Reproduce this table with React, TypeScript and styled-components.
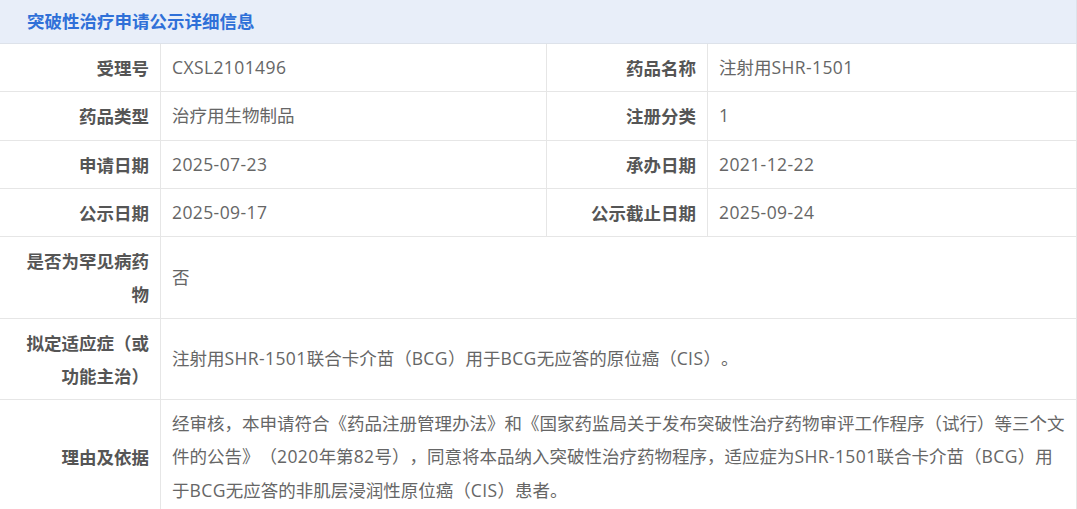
import React from "react";
import styled, { createGlobalStyle } from "styled-components";

const GlobalStyle = createGlobalStyle`
  html, body {
    margin: 0;
    padding: 0;
    background: #fff;
  }
  body {
    font-family: "Open Sans", "Noto Sans CJK SC", sans-serif;
    text-spacing-trim: space-all;
  }
`;

// STYLED COMPONENTS
const Panel = styled.section`
  width: 1077px;
  box-sizing: border-box;
`;

const Header = styled.div`
  height: 44px;
  box-sizing: border-box;
  display: flex;
  align-items: center;
  padding-left: 27px;
  background: #e8eef9;
  border-bottom: 1px solid #dde2ea;
  border-right: 1px solid #dde2ea;
`;

const Title = styled.h2`
  margin: 0 0 2px;
  font-size: 17.5px;
  font-weight: 700;
  color: #2f70d8;
  font-family: "Noto Sans CJK SC", sans-serif;
`;

const Grid = styled.div`
  display: grid;
  grid-template-columns: 161px 386px 161px 369px;
`;

const Cell = styled.div<{ $span?: number }>`
  box-sizing: border-box;
  display: flex;
  align-items: center;
  padding: 7px 11px;
  min-height: 48px;
  border-right: 1px solid #e6e6e6;
  border-bottom: 1px solid #e6e6e6;
  font-size: 17.5px;
  line-height: 33.25px;
  grid-column: ${(p) => (p.$span ? `span ${p.$span}` : "auto")};
`;

const Label = styled(Cell)`
  justify-content: flex-end;
  text-align: right;
  font-weight: 700;
  color: #555;
  font-family: "Noto Sans CJK SC", sans-serif;
`;

const Value = styled(Cell)`
  color: #666;
  font-weight: 400;
  padding-right: 8px;
`;

const Text = styled.span``;

// latin runs are set a touch wider, like the YaHei latin of the original
const Latin = styled.span`
  letter-spacing: 0.4px;
`;

function Mixed({ children }: { children: string }) {
  const parts = children.split(/([A-Za-z0-9.\-]+)/);
  return (
    <Text>
      {parts.map((p, i) =>
        i % 2 === 1 ? <Latin key={i}>{p}</Latin> : <React.Fragment key={i}>{p}</React.Fragment>
      )}
    </Text>
  );
}

type Pair = [string, string];

const pairs: [Pair, Pair][] = [
  [["受理号", "CXSL2101496"], ["药品名称", "注射用SHR-1501"]],
  [["药品类型", "治疗用生物制品"], ["注册分类", "1"]],
  [["申请日期", "2025-07-23"], ["承办日期", "2021-12-22"]],
  [["公示日期", "2025-09-17"], ["公示截止日期", "2025-09-24"]],
];

const wide: Pair[] = [
  ["是否为罕见病药物", "否"],
  ["拟定适应症（或功能主治）", "注射用SHR-1501联合卡介苗（BCG）用于BCG无应答的原位癌（CIS）。"],
  [
    "理由及依据",
    "经审核，本申请符合《药品注册管理办法》和《国家药监局关于发布突破性治疗药物审评工作程序（试行）等三个文件的公告》（2020年第82号），同意将本品纳入突破性治疗药物程序，适应症为SHR-1501联合卡介苗（BCG）用于BCG无应答的非肌层浸润性原位癌（CIS）患者。",
  ],
];

export default function App() {
  return (
    <>
      <GlobalStyle />
      <Panel>
        <Header>
          <Title>突破性治疗申请公示详细信息</Title>
        </Header>
        <Grid>
          {pairs.map(([a, b]) => (
            <React.Fragment key={a[0]}>
              <Label>{a[0]}</Label>
              <Value><Mixed>{a[1]}</Mixed></Value>
              <Label>{b[0]}</Label>
              <Value><Mixed>{b[1]}</Mixed></Value>
            </React.Fragment>
          ))}
          {wide.map(([k, v]) => (
            <React.Fragment key={k}>
              <Label>{k}</Label>
              <Value $span={3}><Mixed>{v}</Mixed></Value>
            </React.Fragment>
          ))}
        </Grid>
      </Panel>
    </>
  );
}
